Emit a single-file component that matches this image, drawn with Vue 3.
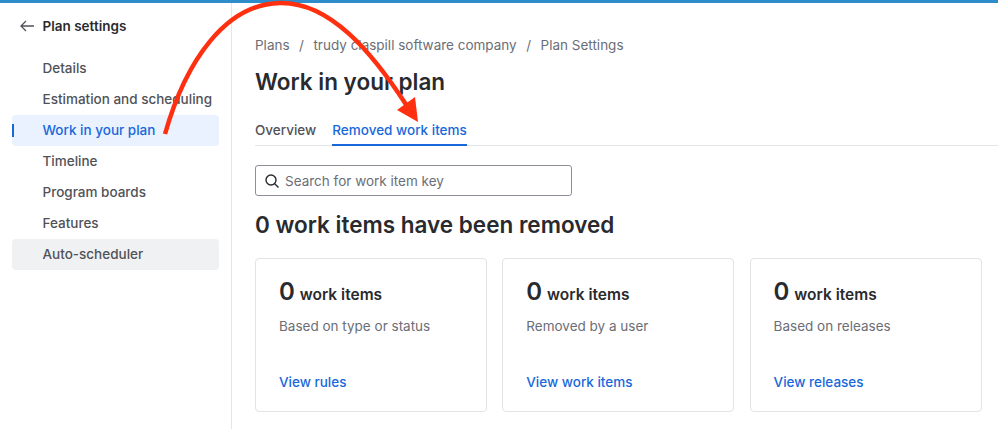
<script setup>
const navItems = [
  { label: 'Details' },
  { label: 'Estimation and scheduling' },
  { label: 'Work in your plan', active: true },
  { label: 'Timeline' },
  { label: 'Program boards' },
  { label: 'Features' },
  { label: 'Auto-scheduler', muted: true }
]

const cards = [
  { text: 'Based on type or status', link: 'View rules' },
  { text: 'Removed by a user', link: 'View work items' },
  { text: 'Based on releases', link: 'View releases' }
]
</script>

<template>
  <div class="page">
    <div class="topbar"></div>
    <div class="body">
      <aside class="sidebar">
        <div class="back">
          <svg class="back-icon" width="16" height="16" viewBox="0 0 16 16" fill="none">
            <path d="M15 8H2M7 3L2 8l5 5" stroke="#505258" stroke-width="1.3" />
          </svg>
          <span>Plan settings</span>
        </div>
        <nav class="nav">
          <div
            v-for="item in navItems"
            :key="item.label"
            class="nav-item"
            :class="{ active: item.active, muted: item.muted }"
          >
            {{ item.label }}
          </div>
        </nav>
      </aside>

      <main class="content">
        <div class="crumbs">
          <span>Plans</span>
          <span>/</span>
          <span>trudy claspill software company</span>
          <span>/</span>
          <span>Plan Settings</span>
        </div>
        <h1>Work in your plan</h1>
        <div class="tabs">
          <div class="tab">Overview</div>
          <div class="tab selected">Removed work items</div>
        </div>
        <div class="search">
          <svg width="16" height="16" viewBox="0 0 16 16" fill="none">
            <circle cx="7" cy="7" r="5" stroke="#292a2e" stroke-width="1.4" />
            <path d="M10.7 10.7L14.5 14.5" stroke="#292a2e" stroke-width="1.4" />
          </svg>
          <span>Search for work item key</span>
        </div>
        <h2>0 work items have been removed</h2>
        <div class="cards">
          <div v-for="card in cards" :key="card.link" class="card">
            <div class="count"><b>0</b> work items</div>
            <p>{{ card.text }}</p>
            <a>{{ card.link }}</a>
          </div>
        </div>
      </main>
    </div>

    <svg class="annotation" width="998" height="429" viewBox="0 0 998 429" fill="none">
      <path
        d="M165 134C186 60 226 4 280 3C330 2 372 52 407 106"
        stroke="#ff3010"
        stroke-width="4.5"
      />
      <path d="M418 122L397 110L415 97Z" fill="#ff3010" />
    </svg>
  </div>
</template>

<style>
body {
  margin: 0;
  background: #fff;
}
</style>

<style scoped>
.page {
  position: relative;
  width: 998px;
  height: 429px;
  overflow: hidden;
  font-family: Inter, "Noto Sans", sans-serif;
  font-size: 13.5px;
  color: #505258;
}

.topbar {
  height: 3px;
  background: #2e8ccb;
}

.body {
  display: flex;
  height: 426px;
}

.sidebar {
  width: 232px;
  flex-shrink: 0;
  box-sizing: border-box;
  border-right: 1px solid #e4e5e7;
  padding: 0 12px;
}

.back {
  display: flex;
  align-items: center;
  gap: 7.5px;
  height: 46px;
  padding-left: 7px;
  font-weight: 600;
  color: #292a2e;
}

.nav {
  margin-top: 4px;
}

.nav-item {
  position: relative;
  width: 207px;
  height: 31px;
  line-height: 31px;
  padding-left: 30.5px;
  box-sizing: border-box;
  border-radius: 4px;
  font-weight: 500;
  white-space: nowrap;
}

.nav-item.active {
  background: #e9f2fe;
  color: #1868db;
}

.nav-item.active::before {
  content: "";
  position: absolute;
  left: 0;
  top: 9px;
  width: 2px;
  height: 13px;
  background: #1868db;
}

.nav-item.muted {
  background: #f0f1f2;
}

.content {
  flex: 1;
  min-width: 0;
  padding-left: 23px;
}

.crumbs {
  display: flex;
  gap: 9.5px;
  margin-top: 34px;
  height: 16px;
  line-height: 16px;
  color: #6b6e76;
  white-space: nowrap;
}

h1 {
  margin: 14px 0 0;
  font-size: 22.5px;
  line-height: 30px;
  font-weight: 600;
  color: #292a2e;
}

.tabs {
  display: flex;
  gap: 16px;
  margin-top: 17px;
  height: 32px;
  box-shadow: inset 0 -1px 0 #e4e5e7;
}

.tab {
  line-height: 32px;
  font-weight: 500;
}

.tab.selected {
  color: #1868db;
  border-bottom: 2.5px solid #1868db;
  height: 32px;
  box-sizing: border-box;
}

.search {
  display: flex;
  align-items: center;
  gap: 5px;
  width: 317px;
  height: 31px;
  margin-top: 19px;
  padding-left: 8px;
  box-sizing: border-box;
  border: 1px solid #8c8f97;
  border-radius: 3px;
  color: #6b6e76;
}

h2 {
  margin: 14px 0 0;
  font-size: 22.5px;
  line-height: 30px;
  font-weight: 600;
  color: #292a2e;
}

.cards {
  display: flex;
  gap: 15.3px;
  margin-top: 18px;
}

.card {
  width: 232px;
  height: 154px;
  box-sizing: border-box;
  border: 1px solid #e2e3e5;
  border-radius: 4px;
  padding: 19px 23px 0;
}

.count {
  height: 28px;
  line-height: 28px;
  font-size: 15.5px;
  font-weight: 600;
  color: #292a2e;
}

.count b {
  font-size: 24px;
  font-weight: 600;
  margin-right: 1px;
}

p {
  margin: 11px 0 0;
  line-height: 18px;
  color: #6b6e76;
}

a {
  display: block;
  margin-top: 38px;
  line-height: 18px;
  font-weight: 500;
  color: #1868db;
}

.annotation {
  position: absolute;
  left: 0;
  top: 0;
  pointer-events: none;
}
</style>
